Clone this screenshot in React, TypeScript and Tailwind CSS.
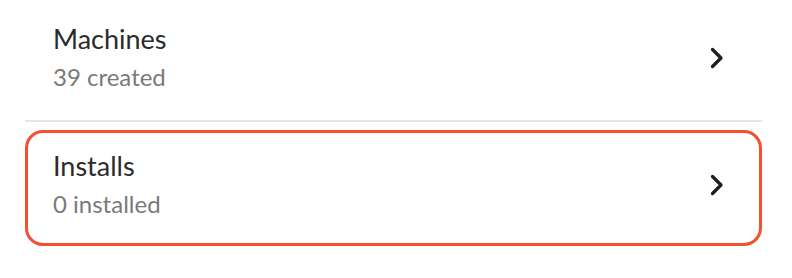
type Item = { title: string; sub: string; active?: boolean };

const items: Item[] = [
  { title: "Machines", sub: "39 created" },
  { title: "Installs", sub: "0 installed", active: true },
];

function Chevron() {
  return (
    <svg width="18" height="24" viewBox="0 0 18 24" fill="none" className="shrink-0">
      <path d="M4.5 3.5 L13 12 L4.5 20.5" stroke="#1f1f1f" strokeWidth="3.3" strokeLinecap="round" strokeLinejoin="round" />
    </svg>
  );
}

function Row({ item }: { item: Item }) {
  return (
    <div
      className={
        item.active
          ? "flex h-[116px] items-center rounded-[18px] border-[3px] border-[#f4502f] pb-[7px] pl-[25px] pr-[33px]"
          : "flex h-[120px] items-center pb-[4px] pl-[28px] pr-[36px]"
      }
    >
      <div className="flex-1">
        <div className="text-[27px] leading-[30px] text-[#2b2b2b]">{item.title}</div>
        <div className="mt-[8px] text-[24px] leading-[30px] text-[#7a7a7a]">{item.sub}</div>
      </div>
      <Chevron />
    </div>
  );
}

export default function App() {
  return (
    <div className="h-[278px] w-[792px] bg-white pl-[25px] pr-[30px] font-['Lato','Open_Sans',sans-serif]">
      <Row item={items[0]} />
      <div className="h-[2px] bg-[#e6e6e6]" />
      <div className="pt-[8px]">
        <Row item={items[1]} />
      </div>
    </div>
  );
}
